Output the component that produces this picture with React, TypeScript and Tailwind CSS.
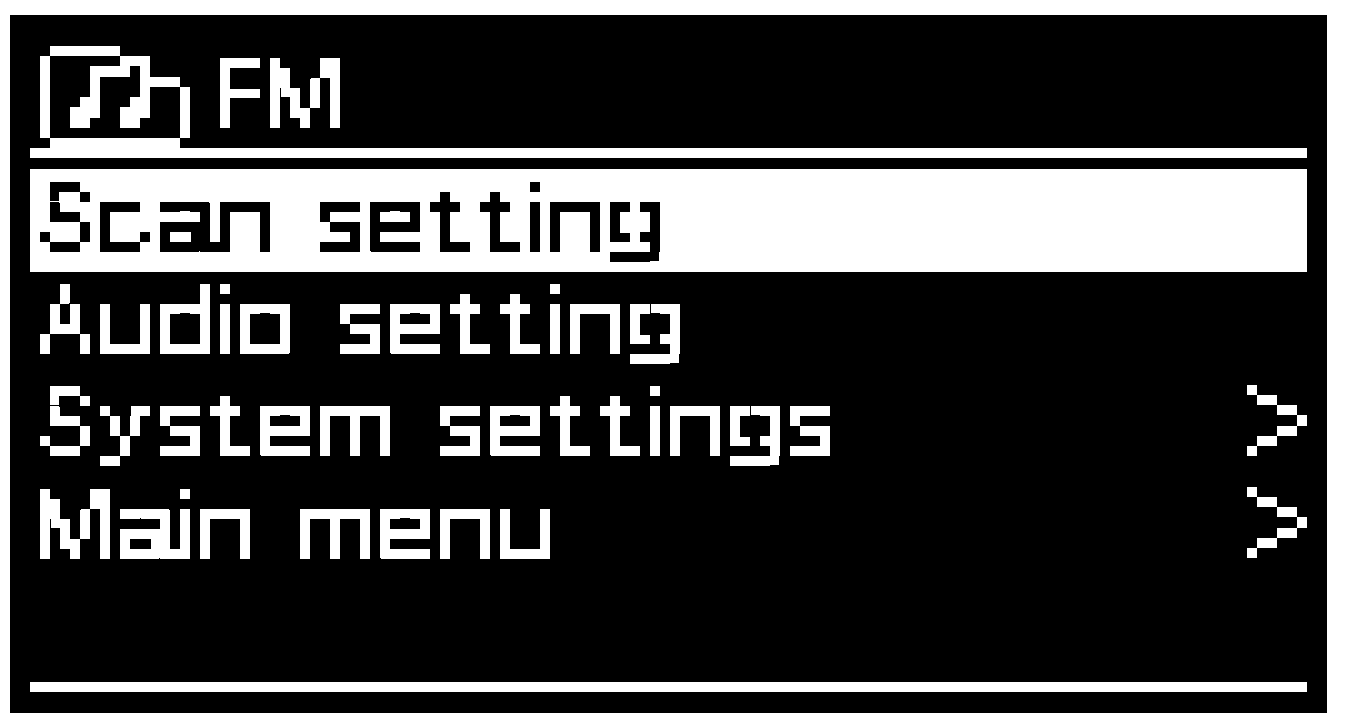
function PixelFilter() {
  return (
    <svg className="absolute w-0 h-0" aria-hidden="true">
      <filter id="lcd" x="0" y="0" width="100%" height="100%" colorInterpolationFilters="sRGB">
        <feFlood x="4" y="4" width="2" height="2" floodColor="#000" />
        <feComposite width="10" height="10" />
        <feTile result="grid" />
        <feComposite in="SourceGraphic" in2="grid" operator="in" />
        <feComponentTransfer>
          <feFuncA type="discrete" tableValues="0 1 1" />
        </feComponentTransfer>
        <feMorphology operator="dilate" radius="4 4" />
      </filter>
    </svg>
  )
}

function NoteIcon() {
  const cells = [
    [10, 0, 70, 10],
    [0, 10, 10, 82],
    [10, 92, 130, 10],
    [140, 41, 10, 51],
    [80, 10, 30, 10],
    [100, 20, 10, 52],
    [110, 31, 30, 10],
    [50, 20, 40, 11],
    [50, 31, 10, 20],
    [40, 51, 20, 10],
    [30, 61, 30, 11],
    [30, 72, 20, 10],
    [90, 51, 10, 10],
    [80, 61, 20, 11],
    [80, 72, 20, 10],
  ]
  return (
    <svg width="150" height="102" viewBox="0 0 150 102" fill="#fff" shapeRendering="crispEdges" className="block">
      {cells.map(([x, y, w, h], i) => (
        <rect key={i} x={x} y={y} width={w} height={h} />
      ))}
    </svg>
  )
}

function Chevron() {
  const cells = [
    [0, 0, 10, 10],
    [10, 10, 20, 10],
    [30, 20, 20, 10],
    [50, 30, 10, 11],
    [30, 41, 20, 10],
    [10, 51, 20, 10],
    [0, 61, 10, 10],
  ]
  return (
    <svg width="60" height="71" viewBox="0 0 60 71" fill="#fff" shapeRendering="crispEdges" className="block">
      {cells.map(([x, y, w, h], i) => (
        <rect key={i} x={x} y={y} width={w} height={h} />
      ))}
    </svg>
  )
}

function cellClass(ch: string) {
  if (ch === " ") return "w-[40px] whitespace-pre"
  if (ch === "i") return "w-[20px] origin-left scale-x-[.6]"
  if (ch === "t") return "w-[36px] mr-[14px] origin-left scale-x-[1.4] indent-[-1.5px]"
  if (ch === "s") return "w-[50px] indent-[-3px]"
  if (ch === "F") return "w-[50px] indent-[-4px] origin-left scale-x-[.8]"
  if (ch === "S" || ch === "A") return "w-[60px] origin-left scale-x-[.8]"
  if (ch === "m") return "w-[80px] indent-[-6px]"
  if (ch === "M") return "w-[80px] indent-[-7px]"
  if (ch === "y") return "w-[60px] origin-[0_40px] scale-y-[.86]"
  if (ch === "g") return "w-[50px] mr-[10px] indent-[-6px] origin-[0_40px] scale-x-[1.2] scale-y-[.86]"
  return "w-[50px] mr-[10px] origin-left scale-x-[1.2] indent-[-6px]"
}

function LcdText({ text, className }: { text: string; className?: string }) {
  return (
    <span className={"block w-fit whitespace-nowrap [filter:url(#lcd)] " + (className ?? "")}>
      {text.split("").map((ch, i) => (
        <span key={i} className={"inline-block " + cellClass(ch)}>{ch}</span>
      ))}
    </span>
  )
}

export default function App() {
  return (
    <div className="min-h-screen bg-white pt-[15px] pl-[10px] font-['Liberation_Sans',Arial,sans-serif] text-[96px] leading-[114px] [-webkit-text-stroke:1.5px]">
      <PixelFilter />
      <div className="flex flex-col w-[1317px] h-[698px] bg-black px-[20px] text-white">
        <div className="flex items-start h-[133px] pl-[10px] pt-[31px]">
          <NoteIcon />
          <LcdText text="FM" className="ml-[30px] -mt-[8px]" />
        </div>
        <div className="h-[10px] bg-white" />

        <div className="mt-[11px] h-[103px] bg-white pl-[10px] text-black">
          <LcdText text="Scan setting" className="-mt-[7px]" />
        </div>
        <div className="h-[103px] pl-[10px]">
          <LcdText text="Audio setting" className="-mt-[8px]" />
        </div>
        <div className="flex justify-between items-start h-[102px] pl-[10px]">
          <LcdText text="System settings" className="-mt-[9px]" />
          <div className="mt-[10px]"><Chevron /></div>
        </div>
        <div className="flex justify-between items-start h-[102px] pl-[10px]">
          <LcdText text="Main menu" className="-mt-[8px]" />
          <div className="mt-[10px]"><Chevron /></div>
        </div>

        <div className="mt-auto mb-[21px] h-[10px] bg-white" />
      </div>
    </div>
  )
}
